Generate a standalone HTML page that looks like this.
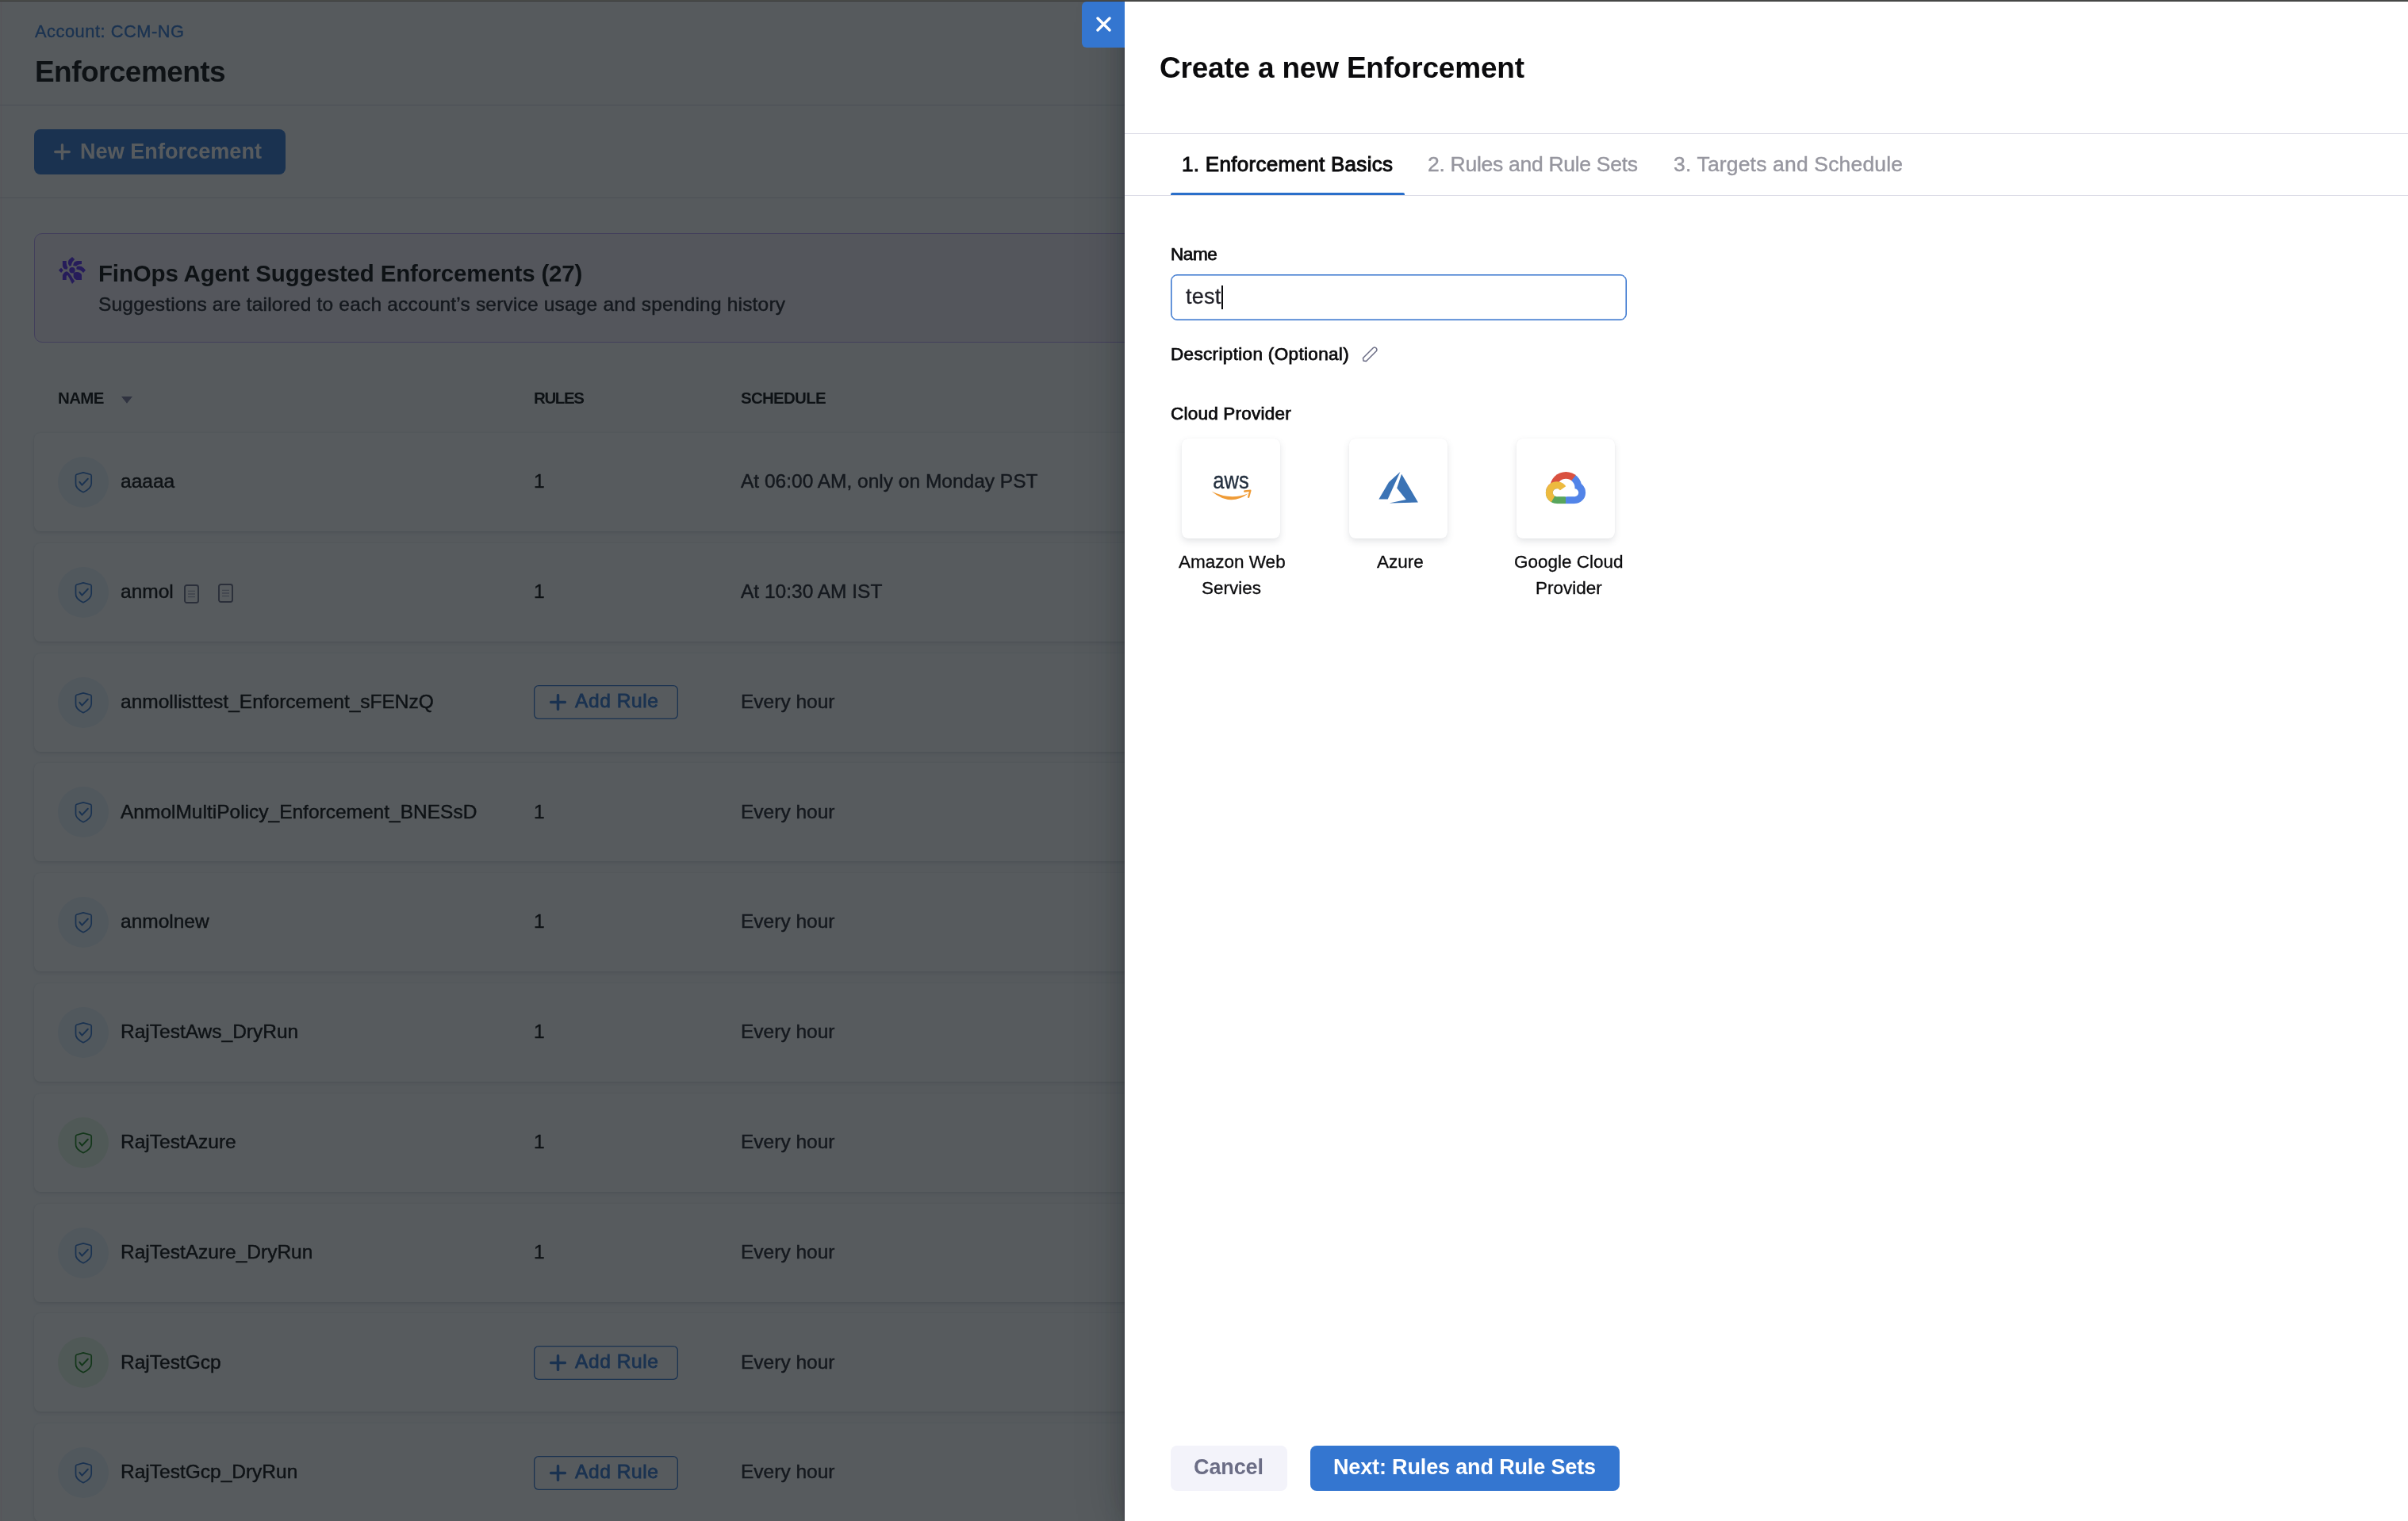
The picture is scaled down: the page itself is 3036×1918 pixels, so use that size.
<!DOCTYPE html>
<html><head><meta charset="utf-8"><style>
html,body{margin:0;padding:0;}
body{width:3036px;height:1918px;overflow:hidden;position:relative;background:#fafbfc;font-family:"Liberation Sans", sans-serif;}
.t{position:absolute;white-space:nowrap;will-change:transform;}
#page{position:absolute;left:0;top:0;width:3036px;height:1918px;background:#fafbfc;}
#drawer{position:absolute;left:1418px;top:0;width:1618px;height:1918px;background:#fff;box-shadow:0 0 0 1px rgba(16,22,26,.1),0 2px 4px rgba(16,22,26,.2),0 8px 24px rgba(16,22,26,.2),0 0 56px rgba(16,22,26,.25);}
#close{position:absolute;left:1364px;top:2px;width:54px;height:58px;background:#3476d0;border-radius:6px 0 0 6px;}
#topbar{position:absolute;left:0;top:0;width:3036px;height:2px;background:linear-gradient(#484a48 50%,#3c3d3c 50%);}
</style></head><body>
<div id="page">
<div style="position:absolute;left:1px;top:0px;width:1px;height:1918px;background:#ffe8ef"></div>
<div class="t" style="left:43.60px;top:28.55px;font-size:21.8px;line-height:21.8px;font-weight:400;color:#3476d0;letter-spacing:0.535px;-webkit-text-stroke:0.35px #3476d0;">Account: CCM-NG</div>
<div class="t" style="left:44.00px;top:72.08px;font-size:37px;line-height:37px;font-weight:700;color:#0b0b0d;letter-spacing:-0.554px;">Enforcements</div>
<div style="position:absolute;left:0px;top:132px;width:1418px;height:1px;background:#d9dae5"></div>
<div style="position:absolute;left:43px;top:163px;width:317px;height:57px;background:#3476d0;border-radius:8px"></div>
<svg style="position:absolute;left:68px;top:181px" width="21" height="21" viewBox="0 0 21 21"><path d="M10.5 1.7v17.6M1.7 10.5h17.6" stroke="#fff" stroke-width="3.3" stroke-linecap="round"/></svg>
<div class="t" style="left:101.00px;top:178.14px;font-size:27px;line-height:27px;font-weight:700;color:#ffffff;letter-spacing:0.066px;">New Enforcement</div>
<div style="position:absolute;left:0px;top:249px;width:1418px;height:1px;background:#d9dae5"></div>
<div style="position:absolute;left:43px;top:294px;width:1500px;height:138px;background:#f3eef8;border:1px solid #b9a0f6;border-radius:10px;box-sizing:border-box"></div>
<svg style="position:absolute;left:68px;top:318px" width="46" height="46" viewBox="0 0 46 46"><g fill="#5a2ef0"><circle cx="23" cy="22.8" r="3.7"/><path d="M23 5.9 L26.2 9.1 L23.5 12 Q22.3 14.5 21.8 17 L19.7 17.8 Q17.6 15.5 17.8 13 Q18.2 10 19 9.5 Z"/><path d="M10.9 10.9 L15.7 10.9 L15.7 14 Q16 17.5 17.5 19.6 L16.3 21.8 L13 21.2 Q10.9 19.5 10.9 17 Z"/><path d="M5.9 22.8 L9.1 19.7 L11.8 22.8 L9.1 26 Z"/><path d="M10.9 35 L15.7 35 L15.7 30.5 Q16.5 28.8 17.3 29.2 L19.5 33 L23 40 L26.2 36.5 Q23.5 33.5 22 30 Q19.5 25.5 16.3 24.2 Q12.5 25 10.9 29 Z"/><path d="M24.6 26.2 Q26.8 25 29 25 Q33.5 25.2 35 28.5 L35 35 L28.5 35 Q25 33.5 24.6 30.5 Z"/><path d="M28.4 19.6 Q28.6 17.6 31 17.6 Q35 17.5 37.5 20 L40 22.8 L37 26 Q35 23.5 33 22.8 Q30.5 21.8 28.4 21.6 Z"/><path d="M24.2 17 Q24.5 13 27 11.8 Q28.5 10.9 30 10.9 L35 10.9 L35 15 L31.5 15.5 Q29 16.5 28.3 17.8 Z"/></g></svg>
<div class="t" style="left:124.00px;top:329.73px;font-size:29.5px;line-height:29.5px;font-weight:700;color:#0b0b0d;letter-spacing:-0.165px;">FinOps Agent Suggested Enforcements (27)</div>
<div class="t" style="left:124.00px;top:371.96px;font-size:24.5px;line-height:24.5px;font-weight:400;color:#22222a;letter-spacing:0.182px;-webkit-text-stroke:0.45px #22222a;">Suggestions are tailored to each account’s service usage and spending history</div>
<div class="t" style="left:72.60px;top:491.65px;font-size:20.5px;line-height:20.5px;font-weight:700;color:#0b0b0d;letter-spacing:-0.624px;">NAME</div>
<svg style="position:absolute;left:152.5px;top:499.7px" width="14" height="9" viewBox="0 0 14 9"><path d="M0 0H14L7 8.7Z" fill="#7d7a9c"/></svg>
<div class="t" style="left:673.30px;top:491.65px;font-size:20.5px;line-height:20.5px;font-weight:700;color:#0b0b0d;letter-spacing:-1.374px;">RULES</div>
<div class="t" style="left:934.40px;top:491.65px;font-size:20.5px;line-height:20.5px;font-weight:700;color:#0b0b0d;letter-spacing:-0.736px;">SCHEDULE</div>
<div style="position:absolute;left:43px;top:546.0px;width:1500px;height:124px;background:#fff;border-radius:8px;box-shadow:0 0 2px rgba(40,41,61,.08),0 2px 4px rgba(96,97,112,.16)"></div>
<div style="position:absolute;left:73px;top:576.0px;width:64px;height:64px;background:#eaf4fb;border-radius:50%"></div>
<svg style="position:absolute;left:93px;top:594.0px" width="24" height="28" viewBox="0 0 24 28"><path d="M12 1.9 L21 4.3 Q22.2 4.7 22.2 6 V15.5 Q22.2 22 12 26.7 Q1.8 22 2.5 15.5 V6 Q2.5 4.7 3.7 4.3 Z" fill="none" stroke="#3476d0" stroke-width="1.7" stroke-linejoin="round"/><path d="M7.4 13.9 L10.4 17.6 L17.8 9.8" fill="none" stroke="#3476d0" stroke-width="2" stroke-linecap="round" stroke-linejoin="round"/></svg>
<div class="t" style="left:152.00px;top:595.26px;font-size:24.5px;line-height:24.5px;font-weight:400;color:#0b0b0d;letter-spacing:0.000px;-webkit-text-stroke:0.45px #0b0b0d;">aaaaa</div>
<div class="t" style="left:673.00px;top:595.26px;font-size:24.5px;line-height:24.5px;font-weight:400;color:#0b0b0d;letter-spacing:0.000px;-webkit-text-stroke:0.45px #0b0b0d;">1</div>
<div class="t" style="left:934.30px;top:595.26px;font-size:24.5px;line-height:24.5px;font-weight:400;color:#22222a;letter-spacing:0.000px;-webkit-text-stroke:0.45px #22222a;">At 06:00 AM, only on Monday PST</div>
<div style="position:absolute;left:43px;top:684.8px;width:1500px;height:124px;background:#fff;border-radius:8px;box-shadow:0 0 2px rgba(40,41,61,.08),0 2px 4px rgba(96,97,112,.16)"></div>
<div style="position:absolute;left:73px;top:714.8px;width:64px;height:64px;background:#eaf4fb;border-radius:50%"></div>
<svg style="position:absolute;left:93px;top:732.8px" width="24" height="28" viewBox="0 0 24 28"><path d="M12 1.9 L21 4.3 Q22.2 4.7 22.2 6 V15.5 Q22.2 22 12 26.7 Q1.8 22 2.5 15.5 V6 Q2.5 4.7 3.7 4.3 Z" fill="none" stroke="#3476d0" stroke-width="1.7" stroke-linejoin="round"/><path d="M7.4 13.9 L10.4 17.6 L17.8 9.8" fill="none" stroke="#3476d0" stroke-width="2" stroke-linecap="round" stroke-linejoin="round"/></svg>
<div class="t" style="left:152.00px;top:734.06px;font-size:24.5px;line-height:24.5px;font-weight:400;color:#0b0b0d;letter-spacing:0.000px;-webkit-text-stroke:0.45px #0b0b0d;">anmol</div>
<svg style="position:absolute;left:232px;top:736.8px" width="19" height="24" viewBox="0 0 19 24"><rect x="1" y="1" width="17" height="22" rx="2.5" fill="none" stroke="#6b6d85" stroke-width="1.9"/><path d="M5 8.3H14M5 12H14M5 15.7H14" stroke="#b0b1c4" stroke-width="1.3"/></svg>
<svg style="position:absolute;left:275px;top:735.8px" width="19" height="24" viewBox="0 0 19 24"><rect x="1" y="1" width="17" height="22" rx="2.5" fill="none" stroke="#6b6d85" stroke-width="1.9"/><path d="M5 8.3H14M5 12H14M5 15.7H14" stroke="#b0b1c4" stroke-width="1.3"/></svg>
<div class="t" style="left:673.00px;top:734.06px;font-size:24.5px;line-height:24.5px;font-weight:400;color:#0b0b0d;letter-spacing:0.000px;-webkit-text-stroke:0.45px #0b0b0d;">1</div>
<div class="t" style="left:934.30px;top:734.06px;font-size:24.5px;line-height:24.5px;font-weight:400;color:#22222a;letter-spacing:0.000px;-webkit-text-stroke:0.45px #22222a;">At 10:30 AM IST</div>
<div style="position:absolute;left:43px;top:823.6px;width:1500px;height:124px;background:#fff;border-radius:8px;box-shadow:0 0 2px rgba(40,41,61,.08),0 2px 4px rgba(96,97,112,.16)"></div>
<div style="position:absolute;left:73px;top:853.6px;width:64px;height:64px;background:#eaf4fb;border-radius:50%"></div>
<svg style="position:absolute;left:93px;top:871.6px" width="24" height="28" viewBox="0 0 24 28"><path d="M12 1.9 L21 4.3 Q22.2 4.7 22.2 6 V15.5 Q22.2 22 12 26.7 Q1.8 22 2.5 15.5 V6 Q2.5 4.7 3.7 4.3 Z" fill="none" stroke="#3476d0" stroke-width="1.7" stroke-linejoin="round"/><path d="M7.4 13.9 L10.4 17.6 L17.8 9.8" fill="none" stroke="#3476d0" stroke-width="2" stroke-linecap="round" stroke-linejoin="round"/></svg>
<div class="t" style="left:152.00px;top:872.86px;font-size:24.5px;line-height:24.5px;font-weight:400;color:#0b0b0d;letter-spacing:0.000px;-webkit-text-stroke:0.45px #0b0b0d;">anmollisttest_Enforcement_sFENzQ</div>
<div style="position:absolute;left:673px;top:864.1px;width:182px;height:43px;box-shadow:inset 0 0 0 1.3px #3476d0;border-radius:6px"></div>
<svg style="position:absolute;left:693px;top:875.1px" width="21" height="21" viewBox="0 0 21 21"><path d="M10.5 1.7v17.6M1.7 10.5h17.6" stroke="#3476d0" stroke-width="3.5" stroke-linecap="round"/></svg>
<div class="t" style="left:725.00px;top:872.36px;font-size:24.5px;line-height:24.5px;font-weight:400;color:#3476d0;letter-spacing:0.598px;-webkit-text-stroke:0.8px #3476d0;">Add Rule</div>
<div class="t" style="left:934.30px;top:872.86px;font-size:24.5px;line-height:24.5px;font-weight:400;color:#22222a;letter-spacing:0.000px;-webkit-text-stroke:0.45px #22222a;">Every hour</div>
<div style="position:absolute;left:43px;top:962.4px;width:1500px;height:124px;background:#fff;border-radius:8px;box-shadow:0 0 2px rgba(40,41,61,.08),0 2px 4px rgba(96,97,112,.16)"></div>
<div style="position:absolute;left:73px;top:992.4px;width:64px;height:64px;background:#eaf4fb;border-radius:50%"></div>
<svg style="position:absolute;left:93px;top:1010.4px" width="24" height="28" viewBox="0 0 24 28"><path d="M12 1.9 L21 4.3 Q22.2 4.7 22.2 6 V15.5 Q22.2 22 12 26.7 Q1.8 22 2.5 15.5 V6 Q2.5 4.7 3.7 4.3 Z" fill="none" stroke="#3476d0" stroke-width="1.7" stroke-linejoin="round"/><path d="M7.4 13.9 L10.4 17.6 L17.8 9.8" fill="none" stroke="#3476d0" stroke-width="2" stroke-linecap="round" stroke-linejoin="round"/></svg>
<div class="t" style="left:152.00px;top:1011.66px;font-size:24.5px;line-height:24.5px;font-weight:400;color:#0b0b0d;letter-spacing:0.000px;-webkit-text-stroke:0.45px #0b0b0d;">AnmolMultiPolicy_Enforcement_BNESsD</div>
<div class="t" style="left:673.00px;top:1011.66px;font-size:24.5px;line-height:24.5px;font-weight:400;color:#0b0b0d;letter-spacing:0.000px;-webkit-text-stroke:0.45px #0b0b0d;">1</div>
<div class="t" style="left:934.30px;top:1011.66px;font-size:24.5px;line-height:24.5px;font-weight:400;color:#22222a;letter-spacing:0.000px;-webkit-text-stroke:0.45px #22222a;">Every hour</div>
<div style="position:absolute;left:43px;top:1101.2px;width:1500px;height:124px;background:#fff;border-radius:8px;box-shadow:0 0 2px rgba(40,41,61,.08),0 2px 4px rgba(96,97,112,.16)"></div>
<div style="position:absolute;left:73px;top:1131.2px;width:64px;height:64px;background:#eaf4fb;border-radius:50%"></div>
<svg style="position:absolute;left:93px;top:1149.2px" width="24" height="28" viewBox="0 0 24 28"><path d="M12 1.9 L21 4.3 Q22.2 4.7 22.2 6 V15.5 Q22.2 22 12 26.7 Q1.8 22 2.5 15.5 V6 Q2.5 4.7 3.7 4.3 Z" fill="none" stroke="#3476d0" stroke-width="1.7" stroke-linejoin="round"/><path d="M7.4 13.9 L10.4 17.6 L17.8 9.8" fill="none" stroke="#3476d0" stroke-width="2" stroke-linecap="round" stroke-linejoin="round"/></svg>
<div class="t" style="left:152.00px;top:1150.46px;font-size:24.5px;line-height:24.5px;font-weight:400;color:#0b0b0d;letter-spacing:0.000px;-webkit-text-stroke:0.45px #0b0b0d;">anmolnew</div>
<div class="t" style="left:673.00px;top:1150.46px;font-size:24.5px;line-height:24.5px;font-weight:400;color:#0b0b0d;letter-spacing:0.000px;-webkit-text-stroke:0.45px #0b0b0d;">1</div>
<div class="t" style="left:934.30px;top:1150.46px;font-size:24.5px;line-height:24.5px;font-weight:400;color:#22222a;letter-spacing:0.000px;-webkit-text-stroke:0.45px #22222a;">Every hour</div>
<div style="position:absolute;left:43px;top:1240.0px;width:1500px;height:124px;background:#fff;border-radius:8px;box-shadow:0 0 2px rgba(40,41,61,.08),0 2px 4px rgba(96,97,112,.16)"></div>
<div style="position:absolute;left:73px;top:1270.0px;width:64px;height:64px;background:#eaf4fb;border-radius:50%"></div>
<svg style="position:absolute;left:93px;top:1288.0px" width="24" height="28" viewBox="0 0 24 28"><path d="M12 1.9 L21 4.3 Q22.2 4.7 22.2 6 V15.5 Q22.2 22 12 26.7 Q1.8 22 2.5 15.5 V6 Q2.5 4.7 3.7 4.3 Z" fill="none" stroke="#3476d0" stroke-width="1.7" stroke-linejoin="round"/><path d="M7.4 13.9 L10.4 17.6 L17.8 9.8" fill="none" stroke="#3476d0" stroke-width="2" stroke-linecap="round" stroke-linejoin="round"/></svg>
<div class="t" style="left:152.00px;top:1289.26px;font-size:24.5px;line-height:24.5px;font-weight:400;color:#0b0b0d;letter-spacing:0.000px;-webkit-text-stroke:0.45px #0b0b0d;">RajTestAws_DryRun</div>
<div class="t" style="left:673.00px;top:1289.26px;font-size:24.5px;line-height:24.5px;font-weight:400;color:#0b0b0d;letter-spacing:0.000px;-webkit-text-stroke:0.45px #0b0b0d;">1</div>
<div class="t" style="left:934.30px;top:1289.26px;font-size:24.5px;line-height:24.5px;font-weight:400;color:#22222a;letter-spacing:0.000px;-webkit-text-stroke:0.45px #22222a;">Every hour</div>
<div style="position:absolute;left:43px;top:1378.8px;width:1500px;height:124px;background:#fff;border-radius:8px;box-shadow:0 0 2px rgba(40,41,61,.08),0 2px 4px rgba(96,97,112,.16)"></div>
<div style="position:absolute;left:73px;top:1408.8px;width:64px;height:64px;background:#e8f7e6;border-radius:50%"></div>
<svg style="position:absolute;left:93px;top:1426.8px" width="24" height="28" viewBox="0 0 24 28"><path d="M12 1.9 L21 4.3 Q22.2 4.7 22.2 6 V15.5 Q22.2 22 12 26.7 Q1.8 22 2.5 15.5 V6 Q2.5 4.7 3.7 4.3 Z" fill="none" stroke="#1b841d" stroke-width="1.7" stroke-linejoin="round"/><path d="M7.4 13.9 L10.4 17.6 L17.8 9.8" fill="none" stroke="#1b841d" stroke-width="2" stroke-linecap="round" stroke-linejoin="round"/></svg>
<div class="t" style="left:152.00px;top:1428.06px;font-size:24.5px;line-height:24.5px;font-weight:400;color:#0b0b0d;letter-spacing:0.000px;-webkit-text-stroke:0.45px #0b0b0d;">RajTestAzure</div>
<div class="t" style="left:673.00px;top:1428.06px;font-size:24.5px;line-height:24.5px;font-weight:400;color:#0b0b0d;letter-spacing:0.000px;-webkit-text-stroke:0.45px #0b0b0d;">1</div>
<div class="t" style="left:934.30px;top:1428.06px;font-size:24.5px;line-height:24.5px;font-weight:400;color:#22222a;letter-spacing:0.000px;-webkit-text-stroke:0.45px #22222a;">Every hour</div>
<div style="position:absolute;left:43px;top:1517.6px;width:1500px;height:124px;background:#fff;border-radius:8px;box-shadow:0 0 2px rgba(40,41,61,.08),0 2px 4px rgba(96,97,112,.16)"></div>
<div style="position:absolute;left:73px;top:1547.6px;width:64px;height:64px;background:#eaf4fb;border-radius:50%"></div>
<svg style="position:absolute;left:93px;top:1565.6px" width="24" height="28" viewBox="0 0 24 28"><path d="M12 1.9 L21 4.3 Q22.2 4.7 22.2 6 V15.5 Q22.2 22 12 26.7 Q1.8 22 2.5 15.5 V6 Q2.5 4.7 3.7 4.3 Z" fill="none" stroke="#3476d0" stroke-width="1.7" stroke-linejoin="round"/><path d="M7.4 13.9 L10.4 17.6 L17.8 9.8" fill="none" stroke="#3476d0" stroke-width="2" stroke-linecap="round" stroke-linejoin="round"/></svg>
<div class="t" style="left:152.00px;top:1566.86px;font-size:24.5px;line-height:24.5px;font-weight:400;color:#0b0b0d;letter-spacing:0.000px;-webkit-text-stroke:0.45px #0b0b0d;">RajTestAzure_DryRun</div>
<div class="t" style="left:673.00px;top:1566.86px;font-size:24.5px;line-height:24.5px;font-weight:400;color:#0b0b0d;letter-spacing:0.000px;-webkit-text-stroke:0.45px #0b0b0d;">1</div>
<div class="t" style="left:934.30px;top:1566.86px;font-size:24.5px;line-height:24.5px;font-weight:400;color:#22222a;letter-spacing:0.000px;-webkit-text-stroke:0.45px #22222a;">Every hour</div>
<div style="position:absolute;left:43px;top:1656.4px;width:1500px;height:124px;background:#fff;border-radius:8px;box-shadow:0 0 2px rgba(40,41,61,.08),0 2px 4px rgba(96,97,112,.16)"></div>
<div style="position:absolute;left:73px;top:1686.4px;width:64px;height:64px;background:#e8f7e6;border-radius:50%"></div>
<svg style="position:absolute;left:93px;top:1704.4px" width="24" height="28" viewBox="0 0 24 28"><path d="M12 1.9 L21 4.3 Q22.2 4.7 22.2 6 V15.5 Q22.2 22 12 26.7 Q1.8 22 2.5 15.5 V6 Q2.5 4.7 3.7 4.3 Z" fill="none" stroke="#1b841d" stroke-width="1.7" stroke-linejoin="round"/><path d="M7.4 13.9 L10.4 17.6 L17.8 9.8" fill="none" stroke="#1b841d" stroke-width="2" stroke-linecap="round" stroke-linejoin="round"/></svg>
<div class="t" style="left:152.00px;top:1705.66px;font-size:24.5px;line-height:24.5px;font-weight:400;color:#0b0b0d;letter-spacing:0.000px;-webkit-text-stroke:0.45px #0b0b0d;">RajTestGcp</div>
<div style="position:absolute;left:673px;top:1696.9px;width:182px;height:43px;box-shadow:inset 0 0 0 1.3px #3476d0;border-radius:6px"></div>
<svg style="position:absolute;left:693px;top:1707.9px" width="21" height="21" viewBox="0 0 21 21"><path d="M10.5 1.7v17.6M1.7 10.5h17.6" stroke="#3476d0" stroke-width="3.5" stroke-linecap="round"/></svg>
<div class="t" style="left:725.00px;top:1705.16px;font-size:24.5px;line-height:24.5px;font-weight:400;color:#3476d0;letter-spacing:0.598px;-webkit-text-stroke:0.8px #3476d0;">Add Rule</div>
<div class="t" style="left:934.30px;top:1705.66px;font-size:24.5px;line-height:24.5px;font-weight:400;color:#22222a;letter-spacing:0.000px;-webkit-text-stroke:0.45px #22222a;">Every hour</div>
<div style="position:absolute;left:43px;top:1795.2px;width:1500px;height:124px;background:#fff;border-radius:8px;box-shadow:0 0 2px rgba(40,41,61,.08),0 2px 4px rgba(96,97,112,.16)"></div>
<div style="position:absolute;left:73px;top:1825.2px;width:64px;height:64px;background:#eaf4fb;border-radius:50%"></div>
<svg style="position:absolute;left:93px;top:1843.2px" width="24" height="28" viewBox="0 0 24 28"><path d="M12 1.9 L21 4.3 Q22.2 4.7 22.2 6 V15.5 Q22.2 22 12 26.7 Q1.8 22 2.5 15.5 V6 Q2.5 4.7 3.7 4.3 Z" fill="none" stroke="#3476d0" stroke-width="1.7" stroke-linejoin="round"/><path d="M7.4 13.9 L10.4 17.6 L17.8 9.8" fill="none" stroke="#3476d0" stroke-width="2" stroke-linecap="round" stroke-linejoin="round"/></svg>
<div class="t" style="left:152.00px;top:1844.46px;font-size:24.5px;line-height:24.5px;font-weight:400;color:#0b0b0d;letter-spacing:0.000px;-webkit-text-stroke:0.45px #0b0b0d;">RajTestGcp_DryRun</div>
<div style="position:absolute;left:673px;top:1835.7px;width:182px;height:43px;box-shadow:inset 0 0 0 1.3px #3476d0;border-radius:6px"></div>
<svg style="position:absolute;left:693px;top:1846.7px" width="21" height="21" viewBox="0 0 21 21"><path d="M10.5 1.7v17.6M1.7 10.5h17.6" stroke="#3476d0" stroke-width="3.5" stroke-linecap="round"/></svg>
<div class="t" style="left:725.00px;top:1843.96px;font-size:24.5px;line-height:24.5px;font-weight:400;color:#3476d0;letter-spacing:0.598px;-webkit-text-stroke:0.8px #3476d0;">Add Rule</div>
<div class="t" style="left:934.30px;top:1844.46px;font-size:24.5px;line-height:24.5px;font-weight:400;color:#22222a;letter-spacing:0.000px;-webkit-text-stroke:0.45px #22222a;">Every hour</div>
</div>
<div style="position:absolute;left:0px;top:0px;width:3036px;height:1918px;background:rgba(16,22,26,0.7)"></div>
<div id="drawer">
<div class="t" style="left:44.00px;top:66.68px;font-size:37px;line-height:37px;font-weight:700;color:#0b0b0d;letter-spacing:-0.205px;">Create a new Enforcement</div>
<div style="position:absolute;left:0px;top:168px;width:1618px;height:1px;background:#dcdce6"></div>
<div class="t" style="left:72.00px;top:193.99px;font-size:26px;line-height:26px;font-weight:400;color:#0b0b0d;letter-spacing:0.294px;-webkit-text-stroke:1.0px #0b0b0d;">1. Enforcement Basics</div>
<div class="t" style="left:382.00px;top:193.57px;font-size:26.5px;line-height:26.5px;font-weight:400;color:#96969f;letter-spacing:-0.287px;-webkit-text-stroke:0.4px #96969f;">2. Rules and Rule Sets</div>
<div class="t" style="left:692.00px;top:193.57px;font-size:26.5px;line-height:26.5px;font-weight:400;color:#96969f;letter-spacing:0.166px;-webkit-text-stroke:0.4px #96969f;">3. Targets and Schedule</div>
<div style="position:absolute;left:57.5px;top:242.5px;width:295.5px;height:3.5px;background:#2a6fca;border-radius:2px 2px 0 0"></div>
<div style="position:absolute;left:0px;top:246px;width:1618px;height:1px;background:#dcdce6"></div>
<div class="t" style="left:58.30px;top:310.15px;font-size:22.5px;line-height:22.5px;font-weight:400;color:#0b0b0d;letter-spacing:-0.440px;-webkit-text-stroke:0.75px #0b0b0d;">Name</div>
<div style="position:absolute;left:58px;top:346px;width:575px;height:58px;border:1px solid #2f6fcc;box-shadow:inset 0 0 0 0.5px #2f6fcc;border-radius:8px;box-sizing:border-box;background:#fff"></div>
<div class="t" style="left:77.20px;top:360.74px;font-size:27px;line-height:27px;font-weight:400;color:#22222a;letter-spacing:0.221px;-webkit-text-stroke:0.3px #22222a;">test</div>
<div style="position:absolute;left:122.2px;top:360px;width:2px;height:29.5px;background:#0b0b0d"></div>
<div class="t" style="left:58.30px;top:436.35px;font-size:22.5px;line-height:22.5px;font-weight:400;color:#0b0b0d;letter-spacing:0.339px;-webkit-text-stroke:0.75px #0b0b0d;">Description (Optional)</div>
<svg style="position:absolute;left:298px;top:436px" width="22" height="22" viewBox="0 0 22 22"><path d="M3 19 L2.5 15.5 L15.5 2.5 Q17 1.5 18.5 2.5 L19.5 3.5 Q20.5 5 19.5 6.5 L6.5 19.5 Z" fill="none" stroke="#6b6d85" stroke-width="1.5" stroke-linejoin="round"/></svg>
<div class="t" style="left:58.30px;top:511.35px;font-size:22.5px;line-height:22.5px;font-weight:400;color:#0b0b0d;letter-spacing:0.220px;-webkit-text-stroke:0.75px #0b0b0d;">Cloud Provider</div>
<div style="position:absolute;left:72px;top:553px;width:124px;height:126px;background:#fff;border-radius:8px;box-shadow:0 0 1px rgba(40,41,61,.08),0 4px 8px rgba(96,97,112,.16)"></div>
<div class="t" style="left:67.67px;top:697.95px;font-size:22.5px;line-height:22.5px;font-weight:400;color:#0b0b0d;letter-spacing:0.000px;-webkit-text-stroke:0.3px #0b0b0d;">Amazon Web</div>
<div class="t" style="left:97.48px;top:730.95px;font-size:22.5px;line-height:22.5px;font-weight:400;color:#0b0b0d;letter-spacing:0.000px;-webkit-text-stroke:0.3px #0b0b0d;">Servies</div>
<div style="position:absolute;left:283px;top:553px;width:124px;height:126px;background:#fff;border-radius:8px;box-shadow:0 0 1px rgba(40,41,61,.08),0 4px 8px rgba(96,97,112,.16)"></div>
<div class="t" style="left:318.01px;top:697.95px;font-size:22.5px;line-height:22.5px;font-weight:400;color:#0b0b0d;letter-spacing:0.000px;-webkit-text-stroke:0.3px #0b0b0d;">Azure</div>
<div style="position:absolute;left:494px;top:553px;width:124px;height:126px;background:#fff;border-radius:8px;box-shadow:0 0 1px rgba(40,41,61,.08),0 4px 8px rgba(96,97,112,.16)"></div>
<div class="t" style="left:490.71px;top:697.95px;font-size:22.5px;line-height:22.5px;font-weight:400;color:#0b0b0d;letter-spacing:0.000px;-webkit-text-stroke:0.3px #0b0b0d;">Google Cloud</div>
<div class="t" style="left:517.62px;top:730.95px;font-size:22.5px;line-height:22.5px;font-weight:400;color:#0b0b0d;letter-spacing:0.000px;-webkit-text-stroke:0.3px #0b0b0d;">Provider</div>
<svg style="position:absolute;left:72px;top:553px" width="124" height="126" viewBox="0 0 124 126"><text x="39.3" y="62.9" font-family="Liberation Sans" font-weight="400" font-size="29" fill="#232f3e" stroke="#232f3e" stroke-width="0.35" textLength="45.4" lengthAdjust="spacingAndGlyphs">aws</text><path d="M37.5 66.6 Q61 86.5 84 69.3 Q61 78.5 37.5 66.6 Z" fill="#ef9b36"/><path d="M79.2 66.5 L86.4 65.6 L84.2 73.8" fill="none" stroke="#ef9b36" stroke-width="2.3" stroke-linecap="round" stroke-linejoin="round"/></svg>
<svg style="position:absolute;left:283px;top:553px" width="124" height="126" viewBox="0 0 124 126"><path d="M64.4 42.1 L50 54.9 L37.4 76.5 L48.7 76.5 Z" fill="#3b73b5"/><path d="M66.1 44.8 L60.2 62.6 L71.8 77.1 L50.5 81.5 L86.9 80.6 Z" fill="#3b73b5"/></svg>
<svg style="position:absolute;left:494px;top:553px" width="124" height="126" viewBox="0 0 124 126"><defs><mask id="gm" maskUnits="userSpaceOnUse" x="0" y="0" width="124" height="126"><circle cx="62.3" cy="62.0" r="20.1" fill="#fff"/><circle cx="50.8" cy="68.2" r="13.9" fill="#fff"/><circle cx="73.2" cy="68.2" r="13.9" fill="#fff"/><rect x="50.8" y="68.2" width="22.400000000000006" height="13.9" fill="#fff"/><circle cx="62.3" cy="62.0" r="11.2" fill="#000"/><circle cx="50.8" cy="68.2" r="5.0" fill="#000"/><circle cx="73.2" cy="68.2" r="5.0" fill="#000"/><rect x="50.8" y="62.0" width="22.400000000000006" height="11.200000000000003" fill="#000"/></mask><mask id="ym" maskUnits="userSpaceOnUse" x="0" y="0" width="124" height="126"><circle cx="50.8" cy="68.2" r="13.9" fill="#fff"/><circle cx="50.8" cy="68.2" r="5.0" fill="#000"/></mask></defs><g mask="url(#gm)"><rect x="0" y="0" width="124" height="126" fill="#5284e8"/><polygon points="62.3,62.0 86.93,30.48 62.30,22.00 22.30,62.00" fill="#d95140"/><rect x="20" y="68.2" width="42.0" height="30" fill="#58a55c"/></g><polygon mask="url(#ym)" points="50.8,68.2 30.80,102.84 10.80,68.20 50.80,28.20 83.57,45.26" fill="#edba3f"/></svg>
<div style="position:absolute;left:58px;top:1823px;width:147px;height:57px;background:#f3f3fa;border-radius:8px"></div>
<div class="t" style="left:87.00px;top:1837.14px;font-size:27px;line-height:27px;font-weight:700;color:#6b6d85;letter-spacing:-0.112px;">Cancel</div>
<div style="position:absolute;left:234px;top:1823px;width:390px;height:57px;background:#3476d0;border-radius:8px"></div>
<div class="t" style="left:263.00px;top:1837.14px;font-size:27px;line-height:27px;font-weight:700;color:#ffffff;letter-spacing:-0.150px;">Next: Rules and Rule Sets</div>
</div>
<div id="close"><svg width="19" height="19" viewBox="0 0 19 19" style="position:absolute;left:18px;top:19px"><path d="M2 2L17 17M17 2L2 17" stroke="#fff" stroke-width="3.4" stroke-linecap="round"/></svg></div>
<div id="topbar"></div>
</body></html>
